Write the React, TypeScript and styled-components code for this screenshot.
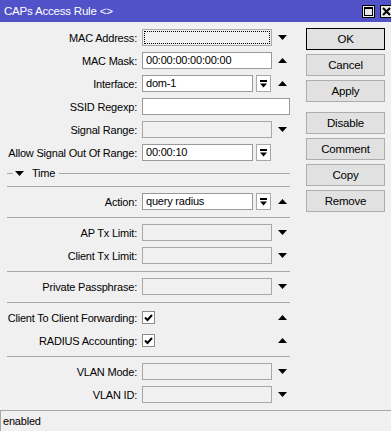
import styled, { createGlobalStyle } from "styled-components";

const GlobalStyle = createGlobalStyle`
  html, body {
    margin: 0;
    padding: 0;
    background: #f0f0f0;
  }
  * {
    box-sizing: border-box;
  }
`;

const Window = styled.div`
  width: 391px;
  height: 431px;
  display: flex;
  flex-direction: column;
  overflow: hidden;
  background: #f0f0f0;
  font-family: "Liberation Sans", Arial, sans-serif;
  font-size: 11px;
  letter-spacing: -0.2px;
  color: #000;
`;

const TitleBar = styled.div`
  height: 22px;
  flex: none;
  display: flex;
  align-items: center;
  justify-content: space-between;
  padding-left: 4px;
  background: #5252c8;
  color: #fff;
  font-size: 11.5px;
`;

const TitleButtons = styled.div`
  display: flex;
  gap: 5px;
  margin-right: -2px;
  margin-top: 1px;
`;

const TitleBtn = styled.div`
  width: 13px;
  height: 13px;
  border: 1px solid #000;
  background: #e8e8e8;
  display: flex;
  align-items: center;
  justify-content: center;
`;

const Body = styled.div`
  flex: 1;
  display: flex;
`;

const Form = styled.div`
  width: 290px;
  padding: 4px 0 0 7px;
  display: flex;
  flex-direction: column;
`;

const Row = styled.div`
  height: 23px;
  display: flex;
  align-items: center;
`;

const Label = styled.div`
  width: 135px;
  padding-right: 5px;
  text-align: right;
  white-space: nowrap;
`;

const Field = styled.div`
  width: 148px;
  display: flex;
  align-items: center;
`;

const Main = styled.div`
  flex: 1;
  display: flex;
  align-items: center;
`;

const TextBox = styled.div<{ $empty?: boolean; $focused?: boolean }>`
  flex: 1;
  height: 17px;
  line-height: 15px;
  padding-left: 3px;
  border: 1px solid ${(p) => (p.$empty ? "#a8a8a8" : "#9a9a9a")};
  background: ${(p) => (p.$empty ? "#f0f0f0" : "#fff")};
  white-space: nowrap;
  overflow: hidden;
  outline: ${(p) => (p.$focused ? "1px dotted #000" : "none")};
  outline-offset: -3px;
`;

const ComboBtn = styled.div`
  width: 15px;
  height: 17px;
  margin: 0 1px 0 3px;
  border: 1px solid #a8a8a8;
  background: #fff;
  display: flex;
  align-items: center;
  justify-content: center;
`;

const ArrowSlot = styled.div`
  width: 18px;
  display: flex;
  justify-content: center;
  padding-left: 2px;
`;

const Separator = styled.hr`
  width: 283px;
  height: 0;
  margin: 4px 0 3px 0;
  border: none;
  border-top: 1px solid #a8a8a8;
`;

const SectionHeader = styled.div`
  height: 18px;
  width: 283px;
  display: flex;
  align-items: center;
`;

const HeaderLine = styled.div<{ $stub?: boolean }>`
  height: 1px;
  background: #a8a8a8;
  width: ${(p) => (p.$stub ? "6px" : "auto")};
  flex: ${(p) => (p.$stub ? "none" : "1")};
`;

const HeaderTitle = styled.span`
  display: flex;
  align-items: center;
  gap: 8px;
  margin: 0 4px 0 2px;
`;

const CheckBox = styled.div`
  width: 13px;
  height: 13px;
  border: 1px solid #8a8a8a;
  background: #fff;
  display: flex;
  align-items: center;
  justify-content: center;
`;

const Buttons = styled.div`
  margin-left: 16px;
  padding-top: 6px;
  display: flex;
  flex-direction: column;
  gap: 4px;
`;

const Button = styled.div<{ $primary?: boolean; $spaced?: boolean }>`
  width: 79px;
  height: 22px;
  display: flex;
  align-items: center;
  justify-content: center;
  background: #e1e1e1;
  border: 1px solid ${(p) => (p.$primary ? "#000" : "#adadad")};
  margin-top: ${(p) => (p.$spaced ? "6px" : "0")};
  font-size: 11.5px;
`;

const StatusBar = styled.div`
  height: 21px;
  flex: none;
  border-top: 1px solid #a8a8a8;
  border-left: 1px solid #a8a8a8;
  padding-left: 2px;
  display: flex;
  align-items: center;
`;

const Down = () => (
  <svg width="9" height="5" viewBox="0 0 9 5">
    <polygon points="0,0 9,0 4.5,5" fill="#000" />
  </svg>
);

const Up = () => (
  <svg width="9" height="5" viewBox="0 0 9 5">
    <polygon points="0,5 9,5 4.5,0" fill="#000" />
  </svg>
);

const ComboIcon = () => (
  <svg width="7" height="8" viewBox="0 0 7 8">
    <rect x="0" y="0" width="7" height="2" fill="#000" />
    <polygon points="0,3.5 7,3.5 3.5,7.5" fill="#000" />
  </svg>
);

const Check = () => (
  <svg width="9" height="8" viewBox="0 0 9 8">
    <path d="M1 3.5 L3.5 6 L8 1" stroke="#000" strokeWidth="2" fill="none" />
  </svg>
);

type Arrow = "up" | "down" | undefined;

const ArrowFor = ({ arrow }: { arrow: Arrow }) =>
  arrow ? <ArrowSlot>{arrow === "up" ? <Up /> : <Down />}</ArrowSlot> : null;

const TextRow = ({
  label,
  value,
  arrow,
  combo,
  focused,
}: {
  label: string;
  value?: string;
  arrow?: Arrow;
  combo?: boolean;
  focused?: boolean;
}) => (
  <Row>
    <Label>{label}</Label>
    <Field>
      <Main>
        <TextBox $empty={value === undefined} $focused={focused}>
          {value}
        </TextBox>
        {combo && (
          <ComboBtn>
            <ComboIcon />
          </ComboBtn>
        )}
      </Main>
      {arrow ? <ArrowFor arrow={arrow} /> : combo ? <ArrowSlot /> : null}
    </Field>
  </Row>
);

const CheckRow = ({ label, arrow }: { label: string; arrow?: Arrow }) => (
  <Row>
    <Label>{label}</Label>
    <Field>
      <Main>
        <CheckBox>
          <Check />
        </CheckBox>
      </Main>
      <ArrowFor arrow={arrow} />
      {!arrow && <ArrowSlot />}
    </Field>
  </Row>
);

export default function App() {
  return (
    <>
      <GlobalStyle />
      <Window>
        <TitleBar>
          <span>CAPs Access Rule &lt;&gt;</span>
          <TitleButtons>
            <TitleBtn>
              <svg width="9" height="9" viewBox="0 0 9 9">
                <rect x="0.5" y="0.5" width="8" height="8" fill="none" stroke="#000" />
                <rect x="0" y="0" width="9" height="2" fill="#000" />
              </svg>
            </TitleBtn>
            <TitleBtn>
              <svg width="9" height="9" viewBox="0 0 9 9">
                <path d="M1 1 L8 8 M8 1 L1 8" stroke="#000" strokeWidth="2" />
              </svg>
            </TitleBtn>
          </TitleButtons>
        </TitleBar>
        <Body>
          <Form>
            <TextRow label="MAC Address:" arrow="down" focused />
            <TextRow label="MAC Mask:" value="00:00:00:00:00:00" arrow="up" />
            <TextRow label="Interface:" value="dom-1" combo arrow="up" />
            <Row>
              <Label>SSID Regexp:</Label>
              <Field>
                <TextBox />
              </Field>
            </Row>
            <TextRow label="Signal Range:" arrow="down" />
            <TextRow label="Allow Signal Out Of Range:" value="00:00:10" combo />
            <SectionHeader>
              <HeaderLine $stub />
              <HeaderTitle>
                <Down />
                Time
              </HeaderTitle>
              <HeaderLine />
            </SectionHeader>
            <Separator />
            <TextRow label="Action:" value="query radius" combo arrow="up" />
            <Separator />
            <TextRow label="AP Tx Limit:" arrow="down" />
            <TextRow label="Client Tx Limit:" arrow="down" />
            <Separator />
            <TextRow label="Private Passphrase:" arrow="down" />
            <Separator />
            <CheckRow label="Client To Client Forwarding:" arrow="up" />
            <CheckRow label="RADIUS Accounting:" arrow="up" />
            <Separator />
            <TextRow label="VLAN Mode:" arrow="down" />
            <TextRow label="VLAN ID:" arrow="down" />
          </Form>
          <Buttons>
            <Button $primary>OK</Button>
            <Button>Cancel</Button>
            <Button>Apply</Button>
            <Button $spaced>Disable</Button>
            <Button>Comment</Button>
            <Button>Copy</Button>
            <Button>Remove</Button>
          </Buttons>
        </Body>
        <StatusBar>enabled</StatusBar>
      </Window>
    </>
  );
}
